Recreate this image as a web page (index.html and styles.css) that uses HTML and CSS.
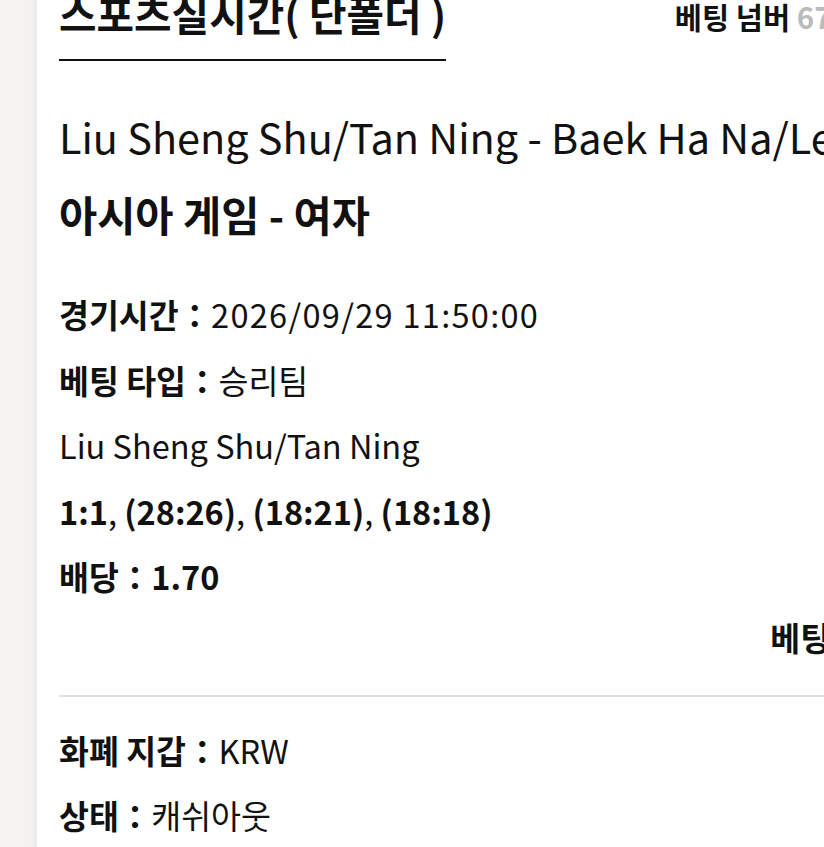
FILE: index.html
```html
<!DOCTYPE html>
<html>
<head>
<meta charset="utf-8">
<title>베팅 상세</title>
<link rel="stylesheet" href="styles.css">
</head>
<body>
<div class="page">
  <div class="card">
    <div class="card-head">
      <h2 class="title">스포츠실시간( 단폴더 )</h2>
      <div class="bet-no">베팅 넘버 <span class="num">6701283941552</span></div>
    </div>
    <div class="match">
      <p class="teams">Liu Sheng Shu/Tan Ning - Baek Ha Na/Lee So Hee</p>
      <p class="league">아시아 게임 - 여자</p>
    </div>
    <ul class="info">
      <li><b>경기시간：</b><span class="time">2026/09/29 11:50:00</span></li>
      <li><b>베팅 타입：</b>승리팀</li>
      <li>Liu Sheng Shu/Tan Ning</li>
      <li><b>1:1</b>, <b>(28:26)</b>, <b>(18:21)</b>, <b>(18:18)</b></li>
      <li><b>배당：1.70</b></li>
    </ul>
    <div class="amount">베팅 금액：5,000</div>
    <hr class="divider">
    <ul class="info">
      <li><b>화폐 지갑：</b>KRW</li>
      <li><b>상태：</b>캐쉬아웃</li>
    </ul>
  </div>
</div>
</body>
</html>
```

FILE: styles.css
```css
html, body {
  margin: 0;
  padding: 0;
  overflow: hidden;
}
body {
  background: #f4f3f1;
  font-family: "Noto Sans CJK KR", "Noto Sans", sans-serif;
  color: #111;
}
.page {
  padding-left: 37px;
  margin-top: -11px;
}
.card {
  box-sizing: border-box;
  width: 1008px;
  background: #fff;
  box-shadow: 0 0 8px rgba(0, 0, 0, 0.08);
  padding: 0 22px 40px;
}
.card-head {
  display: flex;
  justify-content: space-between;
  align-items: flex-start;
}
.title {
  margin: 0;
  font-size: 40.8px;
  font-weight: 700;
  line-height: 50px;
  padding-bottom: 20px;
  border-bottom: 2px solid #111;
}
.bet-no {
  font-size: 29.5px;
  font-weight: 700;
  line-height: 54px;
  white-space: nowrap;
}
.bet-no .num {
  color: #bbb;
}
.match {
  margin-top: 36px;
}
.teams {
  margin: 0;
  font-size: 41.4px;
  line-height: 78px;
  white-space: nowrap;
}
.league {
  margin: 0;
  font-size: 41.5px;
  font-weight: 700;
  line-height: 78px;
}
.info {
  list-style: none;
  margin: 38px 0 0;
  padding: 0;
  display: flex;
  flex-direction: column;
  gap: 20px;
}
.info li {
  font-size: 32.5px;
  line-height: 45.5px;
  white-space: nowrap;
}
.info b {
  font-weight: 700;
}
.time {
  letter-spacing: 1.3px;
}
.amount {
  text-align: right;
  font-size: 32.5px;
  font-weight: 700;
  line-height: 45px;
  margin-top: 15px;
  padding-right: 6px;
  white-space: nowrap;
}
.divider {
  border: 0;
  border-top: 2px solid #e0e0e0;
  margin: 36px 0 0;
}
.divider + .info {
  margin-top: 30px;
}
```
